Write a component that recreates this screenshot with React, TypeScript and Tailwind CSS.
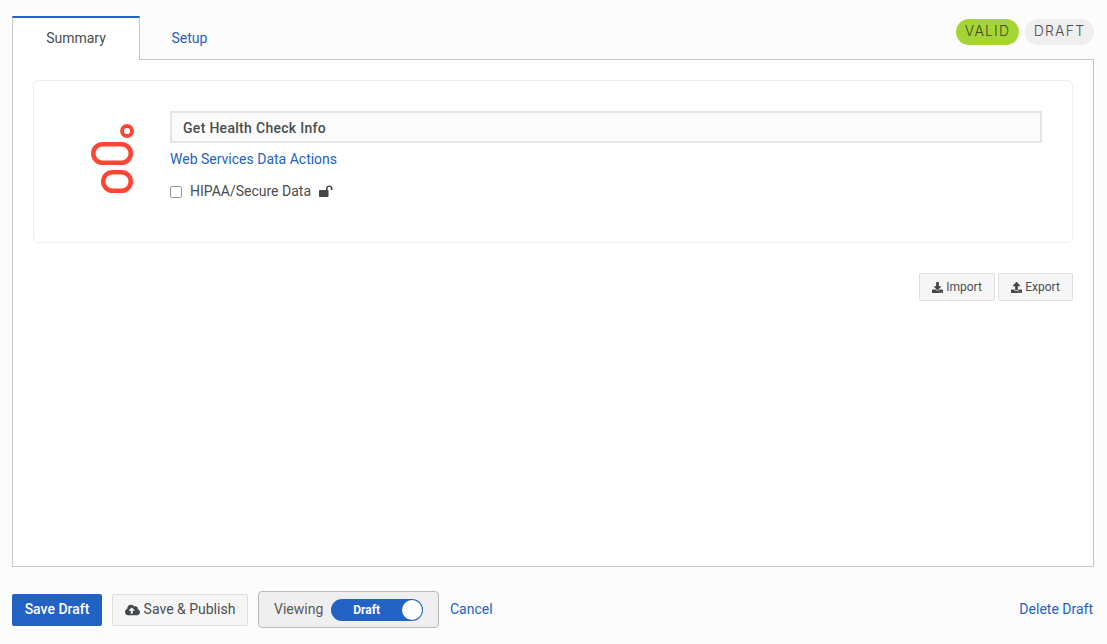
import React from "react";
import { FaCloudUploadAlt, FaDownload, FaUpload } from "react-icons/fa";

const Logo: React.FC = () => (
  <svg width="46" height="72" viewBox="0 0 46 72" fill="none" stroke="#ff4433" strokeWidth="4.5">
    <circle cx="37" cy="7" r="5" strokeWidth="3.8" />
    <rect x="3.25" y="20.25" width="37.5" height="18.5" rx="9.25" />
    <rect x="13.25" y="48.25" width="27.5" height="18.5" rx="9.25" />
  </svg>
);

const UnlockIcon: React.FC = () => (
  <svg width="15" height="12" viewBox="0 0 15 12" fill="#44474a">
    <rect x="0" y="5" width="9.5" height="7" rx="0.8" />
    <path d="M7 5.2V3.4C7 1.6 8.4.5 10.2.5s3.3 1.1 3.3 2.9v1.5h-1.7V3.4c0-.9-.7-1.3-1.6-1.3s-1.6.4-1.6 1.3v1.8z" />
  </svg>
);

const SmallButton: React.FC<{ icon: React.ReactNode; label: string; width: string }> = ({ icon, label, width }) => (
  <button className={`flex h-[28px] ${width} items-center justify-center gap-[3px] rounded-[2px] border border-[#dedede] bg-[#f6f6f6] text-[12px] text-[#4c4f53]`}>
    {icon}
    {label}
  </button>
);

export default function App() {
  return (
    <div className="flex h-[644px] w-[1107px] flex-col overflow-hidden bg-[#fcfcfc] pt-4 pr-[13px] pl-3 text-[#44474a] [font-family:Roboto,sans-serif]">
      <div className="relative z-10 flex h-[44px] items-start justify-between">
        <div className="flex">
          <div className="flex h-[44px] w-[128px] items-center justify-center border-x border-x-[#c4c6c8] border-t-2 border-t-[#2563c0] bg-white pb-[2px] text-[14px] text-[#4a4d50]">
            Summary
          </div>
          <div className="flex h-[44px] w-[99px] items-center justify-center pt-[1px] text-[14px] text-[#2262c4]">Setup</div>
        </div>
        <div className="flex gap-[6px] pt-[3px] text-[14px] font-light tracking-[1.2px] [font-family:Inter,sans-serif]">
          <div className="flex h-[26px] w-[63px] items-center justify-center rounded-full bg-[#a4d535] pb-[3px] text-[#3f4a2a]">VALID</div>
          <div className="flex h-[26px] w-[69px] items-center justify-center rounded-full bg-[#efefef] pb-[3px] text-[#4a4d50]">DRAFT</div>
        </div>
      </div>

      <div className="-mt-[1px] h-[508px] border border-[#c4c6c8] bg-white px-5 pt-5">
        <div className="flex h-[163px] rounded-[6px] border border-[#eceeef] bg-white">
          <div className="flex w-[136px] shrink-0 justify-end pt-[43px] pr-[34px]">
            <Logo />
          </div>
          <div className="flex-1 pt-[30px] pr-[30px]">
            <div className="flex h-[32px] items-center border-2 border-[#e2e6ea] bg-[#fbfbfb] pt-[2px] pl-[11px] text-[14px] font-medium tracking-[0.3px] text-[#4a4d50]">
              Get Health Check Info
            </div>
            <div className="mt-[8px] text-[14px] leading-[17px] text-[#2262c4]">Web Services Data Actions</div>
            <div className="mt-[13px] flex items-center text-[14px] text-[#4a4d50]">
              <input type="checkbox" className="h-[12px] w-[12px] appearance-none rounded-[2px] border border-[#9a9a9a] bg-white" readOnly />
              <span className="ml-[8px]">HIPAA/Secure Data</span>
              <span className="mb-[2px] ml-[8px]">
                <UnlockIcon />
              </span>
            </div>
          </div>
        </div>

        <div className="mt-[30px] flex justify-end gap-[3px]">
          <SmallButton icon={<FaDownload className="h-[11px] w-[11px] text-[#44474a]" />} label="Import" width="w-[76px]" />
          <SmallButton icon={<FaUpload className="h-[11px] w-[11px] text-[#44474a]" />} label="Export" width="w-[75px]" />
        </div>
      </div>

      <div className="mt-[24px] flex h-[37px] items-center text-[14px]">
        <button className="h-[32px] w-[90px] rounded-[2px] bg-[#2262c4] text-[14px] font-medium text-white">Save Draft</button>
        <button className="ml-[10px] flex h-[32px] w-[136px] items-center justify-center gap-[4px] rounded-[2px] border border-[#dedede] bg-[#f6f6f6] text-[#4c4f53]">
          <FaCloudUploadAlt className="h-[14px] w-[15px] text-[#44474a]" />
          Save &amp; Publish
        </button>
        <div className="ml-[10px] flex h-[37px] w-[181px] items-center rounded-[4px] border border-[#b9b9b9] bg-[#efefef] pl-[15px]">
          <span className="text-[#56595c]">Viewing</span>
          <div className="relative ml-[8px] flex h-[22px] w-[92px] items-center rounded-full bg-[#2262c4] pl-[22px] text-[12px] font-bold text-white">
            Draft
            <span className="absolute top-[1px] right-[1px] h-[20px] w-[20px] rounded-full bg-white" />
          </div>
        </div>
        <span className="ml-[11px] text-[#2262c4]">Cancel</span>
        <span className="ml-auto pr-[1px] text-[#2262c4]">Delete Draft</span>
      </div>
    </div>
  );
}
